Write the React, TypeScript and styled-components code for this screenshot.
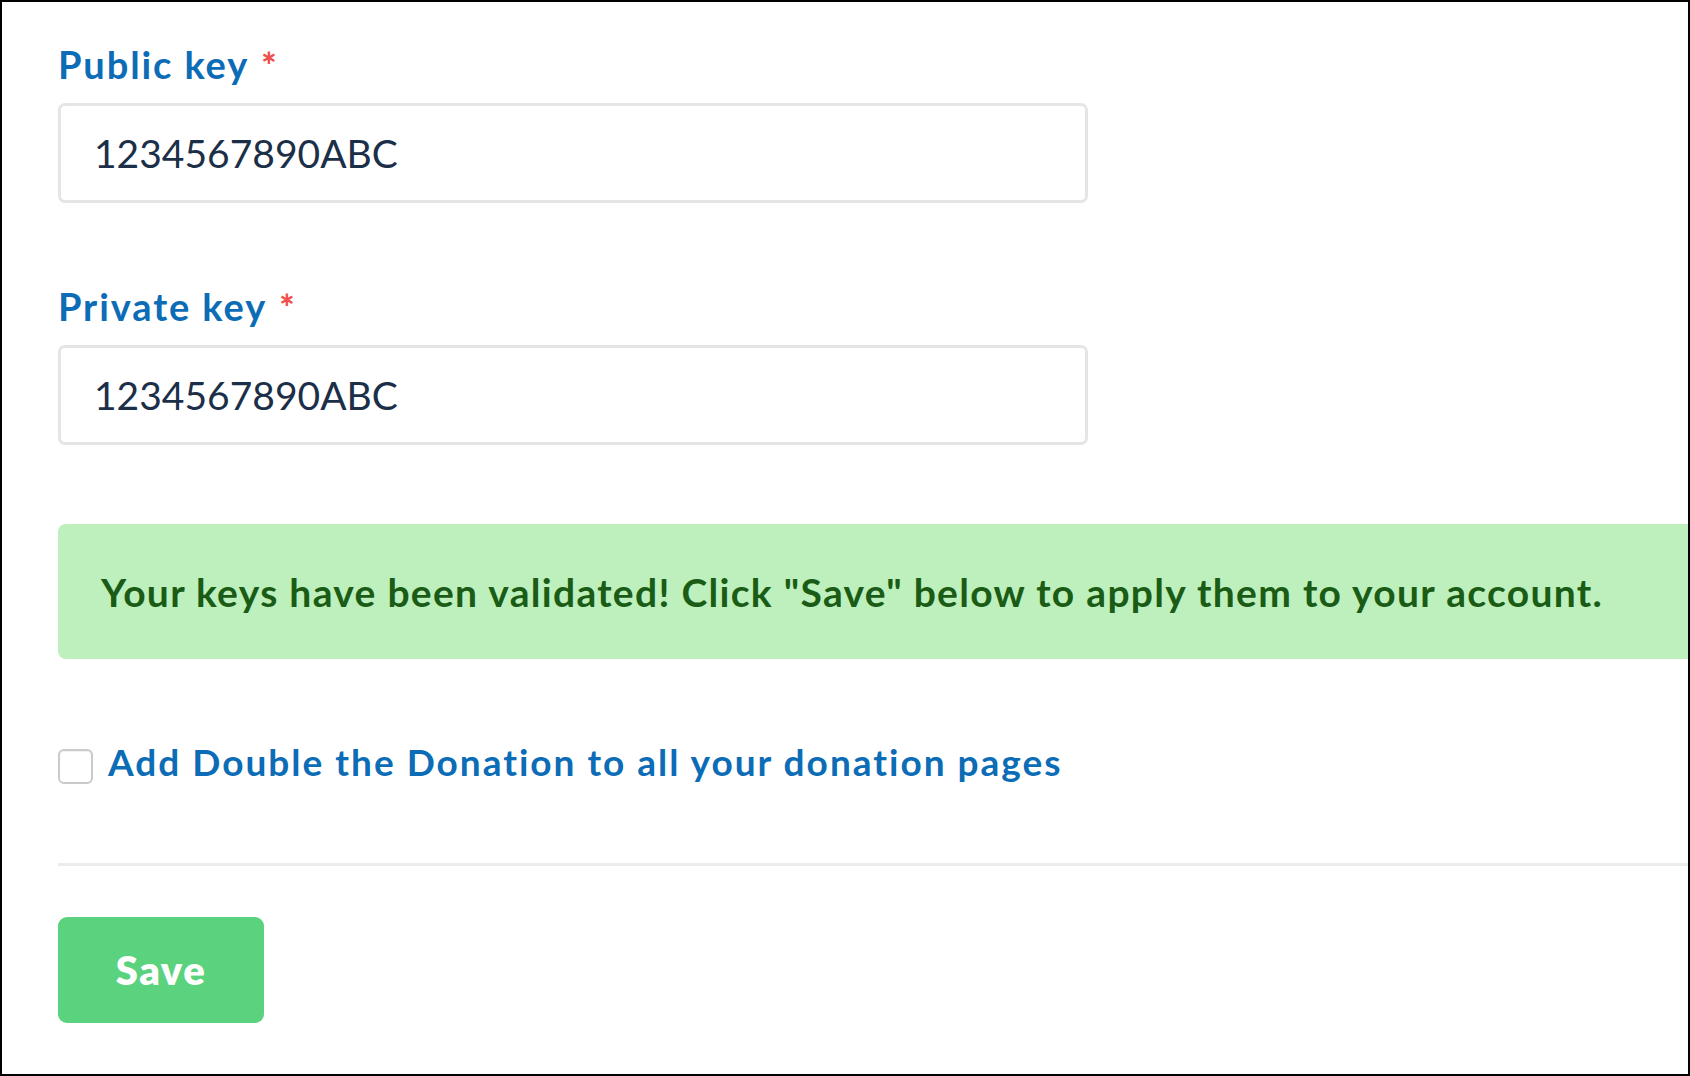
import styled, { createGlobalStyle } from "styled-components";

const GlobalStyle = createGlobalStyle`
  * { box-sizing: border-box; }
  html, body { margin: 0; padding: 0; background: #fff; }
  body { font-family: Lato, "Open Sans", Arial, sans-serif; }
`;

const Frame = styled.div`
  width: 1690px;
  height: 1076px;
  border: 2px solid #000;
  overflow: hidden;
  background: #fff;
`;

const Form = styled.form`
  display: flex;
  flex-direction: column;
  padding: 38px 0 0 56px;
  margin-right: -40px;
`;

const Field = styled.div`
  display: flex;
  flex-direction: column;
  gap: 14px;
  margin-bottom: 79px;
`;

const Label = styled.label`
  display: block;
  color: #0c6cb6;
  font-size: 38px;
  font-weight: 700;
  line-height: 48px;
  letter-spacing: 1.9px;
`;

const Required = styled.span`
  color: #f0504c;
  font-size: 36px;
  font-weight: 900;
  margin-left: 12px;
  letter-spacing: 0;
`;

const Input = styled.input`
  width: 1030px;
  height: 100px;
  border: 3px solid #e5e5e5;
  border-radius: 7px;
  padding: 0 33px;
  font-family: Lato, "Open Sans", Arial, sans-serif;
  font-size: 39px;
  color: #1c2f48;
  outline: none;
  background: #fff;
`;

const Alert = styled.div`
  display: flex;
  align-items: center;
  height: 135px;
  padding: 0 43px;
  background: #bdf0bc;
  border-radius: 8px;
  color: #1a5c15;
  font-size: 39px;
  font-weight: 700;
  letter-spacing: 1.3px;
  margin-bottom: 80px;
`;

const CheckRow = styled.label`
  display: flex;
  align-items: center;
  gap: 15px;
  color: #0c6cb6;
  font-size: 37px;
  font-weight: 700;
  line-height: 35px;
  letter-spacing: 2px;
`;

const Box = styled.span`
  flex: none;
  width: 35px;
  height: 35px;
  border: 2px solid #cacaca;
  border-radius: 6px;
  background: #fff;
  box-shadow: inset 0 1px 1px rgba(0, 0, 0, 0.06);
  margin-top: 10px;
`;

const Divider = styled.hr`
  width: 100%;
  height: 3px;
  border: none;
  background: #ececec;
  margin: 79px 0 51px;
`;

const SaveButton = styled.button`
  width: 206px;
  height: 106px;
  border: none;
  border-radius: 9px;
  background: #5ad27e;
  color: #fff;
  font-family: Lato, "Open Sans", Arial, sans-serif;
  font-size: 40px;
  font-weight: 800;
  letter-spacing: 1.5px;
  align-self: flex-start;
`;

export default function App() {
  return (
    <>
      <GlobalStyle />
      <Frame>
        <Form onSubmit={(e) => e.preventDefault()}>
          <Field>
            <Label>
              Public key<Required>*</Required>
            </Label>
            <Input defaultValue="1234567890ABC" />
          </Field>
          <Field>
            <Label>
              Private key<Required>*</Required>
            </Label>
            <Input defaultValue="1234567890ABC" />
          </Field>
          <Alert>
            Your keys have been validated! Click "Save" below to apply them to your account.
          </Alert>
          <CheckRow>
            <Box />
            Add Double the Donation to all your donation pages
          </CheckRow>
          <Divider />
          <SaveButton type="submit">Save</SaveButton>
        </Form>
      </Frame>
    </>
  );
}
